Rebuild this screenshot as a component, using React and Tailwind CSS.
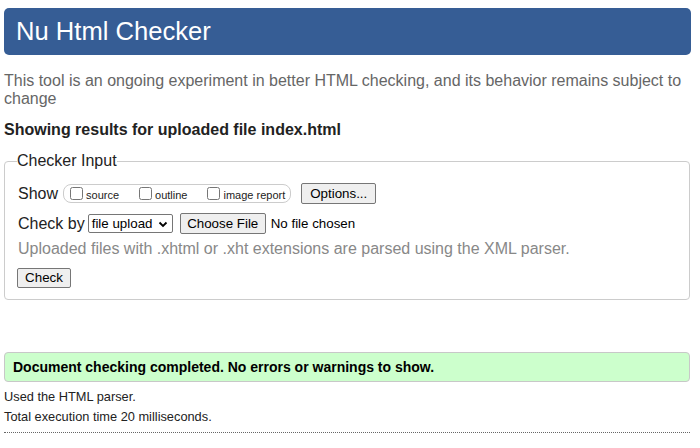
import React from "react";

// Botão no estilo padrão do Chrome
const NativeButton = ({ children, className = "" }) => (
  <span
    className={`inline-flex items-center justify-center bg-[#efefef] border border-[#767676] rounded-[2px] px-[6px] text-[13.33px] leading-none text-black ${className}`}
  >
    {children}
  </span>
);

const CheckOption = ({ label, last }) => (
  <label className={`flex items-center ${last ? "" : "mr-[20px]"}`}>
    <input type="checkbox" className="w-[13px] h-[13px] m-0" />
    <span className="ml-[3px] text-[11px] leading-none mt-[3px]">{label}</span>
  </label>
);

const App = () => {
  return (
    <div className="font-['Liberation_Sans',Arial,sans-serif] bg-white text-[#222] pl-[4px] pr-[9px] pt-[8px] min-h-[448px]">
      <h1 className="h-[47px] bg-[#365d95] rounded-[5px] flex items-center px-[12px] text-white text-[25.6px] leading-none">
        Nu Html Checker
      </h1>

      <p className="mt-[17px] text-[16px] leading-[18px] text-[#666]">
        This tool is an ongoing experiment in better HTML checking, and its
        behavior remains subject to change
      </p>

      <p className="mt-[13px] text-[16px] leading-[18px] font-bold text-[#222]">
        Showing results for uploaded file index.html
      </p>

      <fieldset className="mt-[13px] mr-[1px] border border-[#ccc] rounded-[4px] px-[13px] pb-[10px]">
        <legend className="px-[0px] ml-[-1px] text-[16px] leading-[18px] text-[#222]">
          Checker Input
        </legend>

        <div className="mt-[13px] flex items-center h-[21px]">
          <span className="text-[16px] leading-none mr-[5px]">Show</span>
          <div className="flex items-center h-[19px] border border-[#ccc] rounded-[8px] pl-[6px] pr-[5px]">
            <CheckOption label="source" />
            <CheckOption label="outline" />
            <CheckOption label="image report" last />
          </div>
          <NativeButton className="ml-[10px] h-[21px] w-[75px]">Options...</NativeButton>
        </div>

        <div className="mt-[9px] flex items-center h-[21px]">
          <span className="text-[16px] leading-none mr-[3px]">Check by</span>
          <span className="flex items-center h-[19px] w-[85px] border border-[#767676] rounded-[2px] pl-[3px] pr-[4px] text-[13.33px] text-black justify-between">
            file upload
            <svg width="10" height="10" viewBox="0 0 10 10">
              <path d="M1.5 3.5 L5 7 L8.5 3.5" fill="none" stroke="#000" strokeWidth="1.8" />
            </svg>
          </span>
          <NativeButton className="ml-[7px] h-[21px] w-[86px]">Choose File</NativeButton>
          <span className="ml-[5px] text-[13.33px] text-black">No file chosen</span>
        </div>

        <p className="mt-[6px] text-[16px] leading-[18px] text-[#888]">
          Uploaded files with .xhtml or .xht extensions are parsed using the XML parser.
        </p>

        <NativeButton className="mt-[10px] h-[20px] w-[54px] ml-[-1px]">Check</NativeButton>
      </fieldset>

      <div className="mt-[52px] mr-[1px] h-[30px] bg-[#ccffcc] border border-[#c8c8c8] rounded-[4px] flex items-center px-[8px]">
        <span className="text-[14px] font-bold text-black">
          Document checking completed. No errors or warnings to show.
        </span>
      </div>

      <p className="mt-[7px] text-[12.8px] leading-[15px] text-[#222]">Used the HTML parser.</p>
      <p className="mt-[5px] text-[12.8px] leading-[15px] text-[#222]">
        Total execution time 20 milliseconds.
      </p>

      <div className="mt-[8px] mr-[1px] border-t border-dotted border-[#666]" />
    </div>
  );
};

export default App;
